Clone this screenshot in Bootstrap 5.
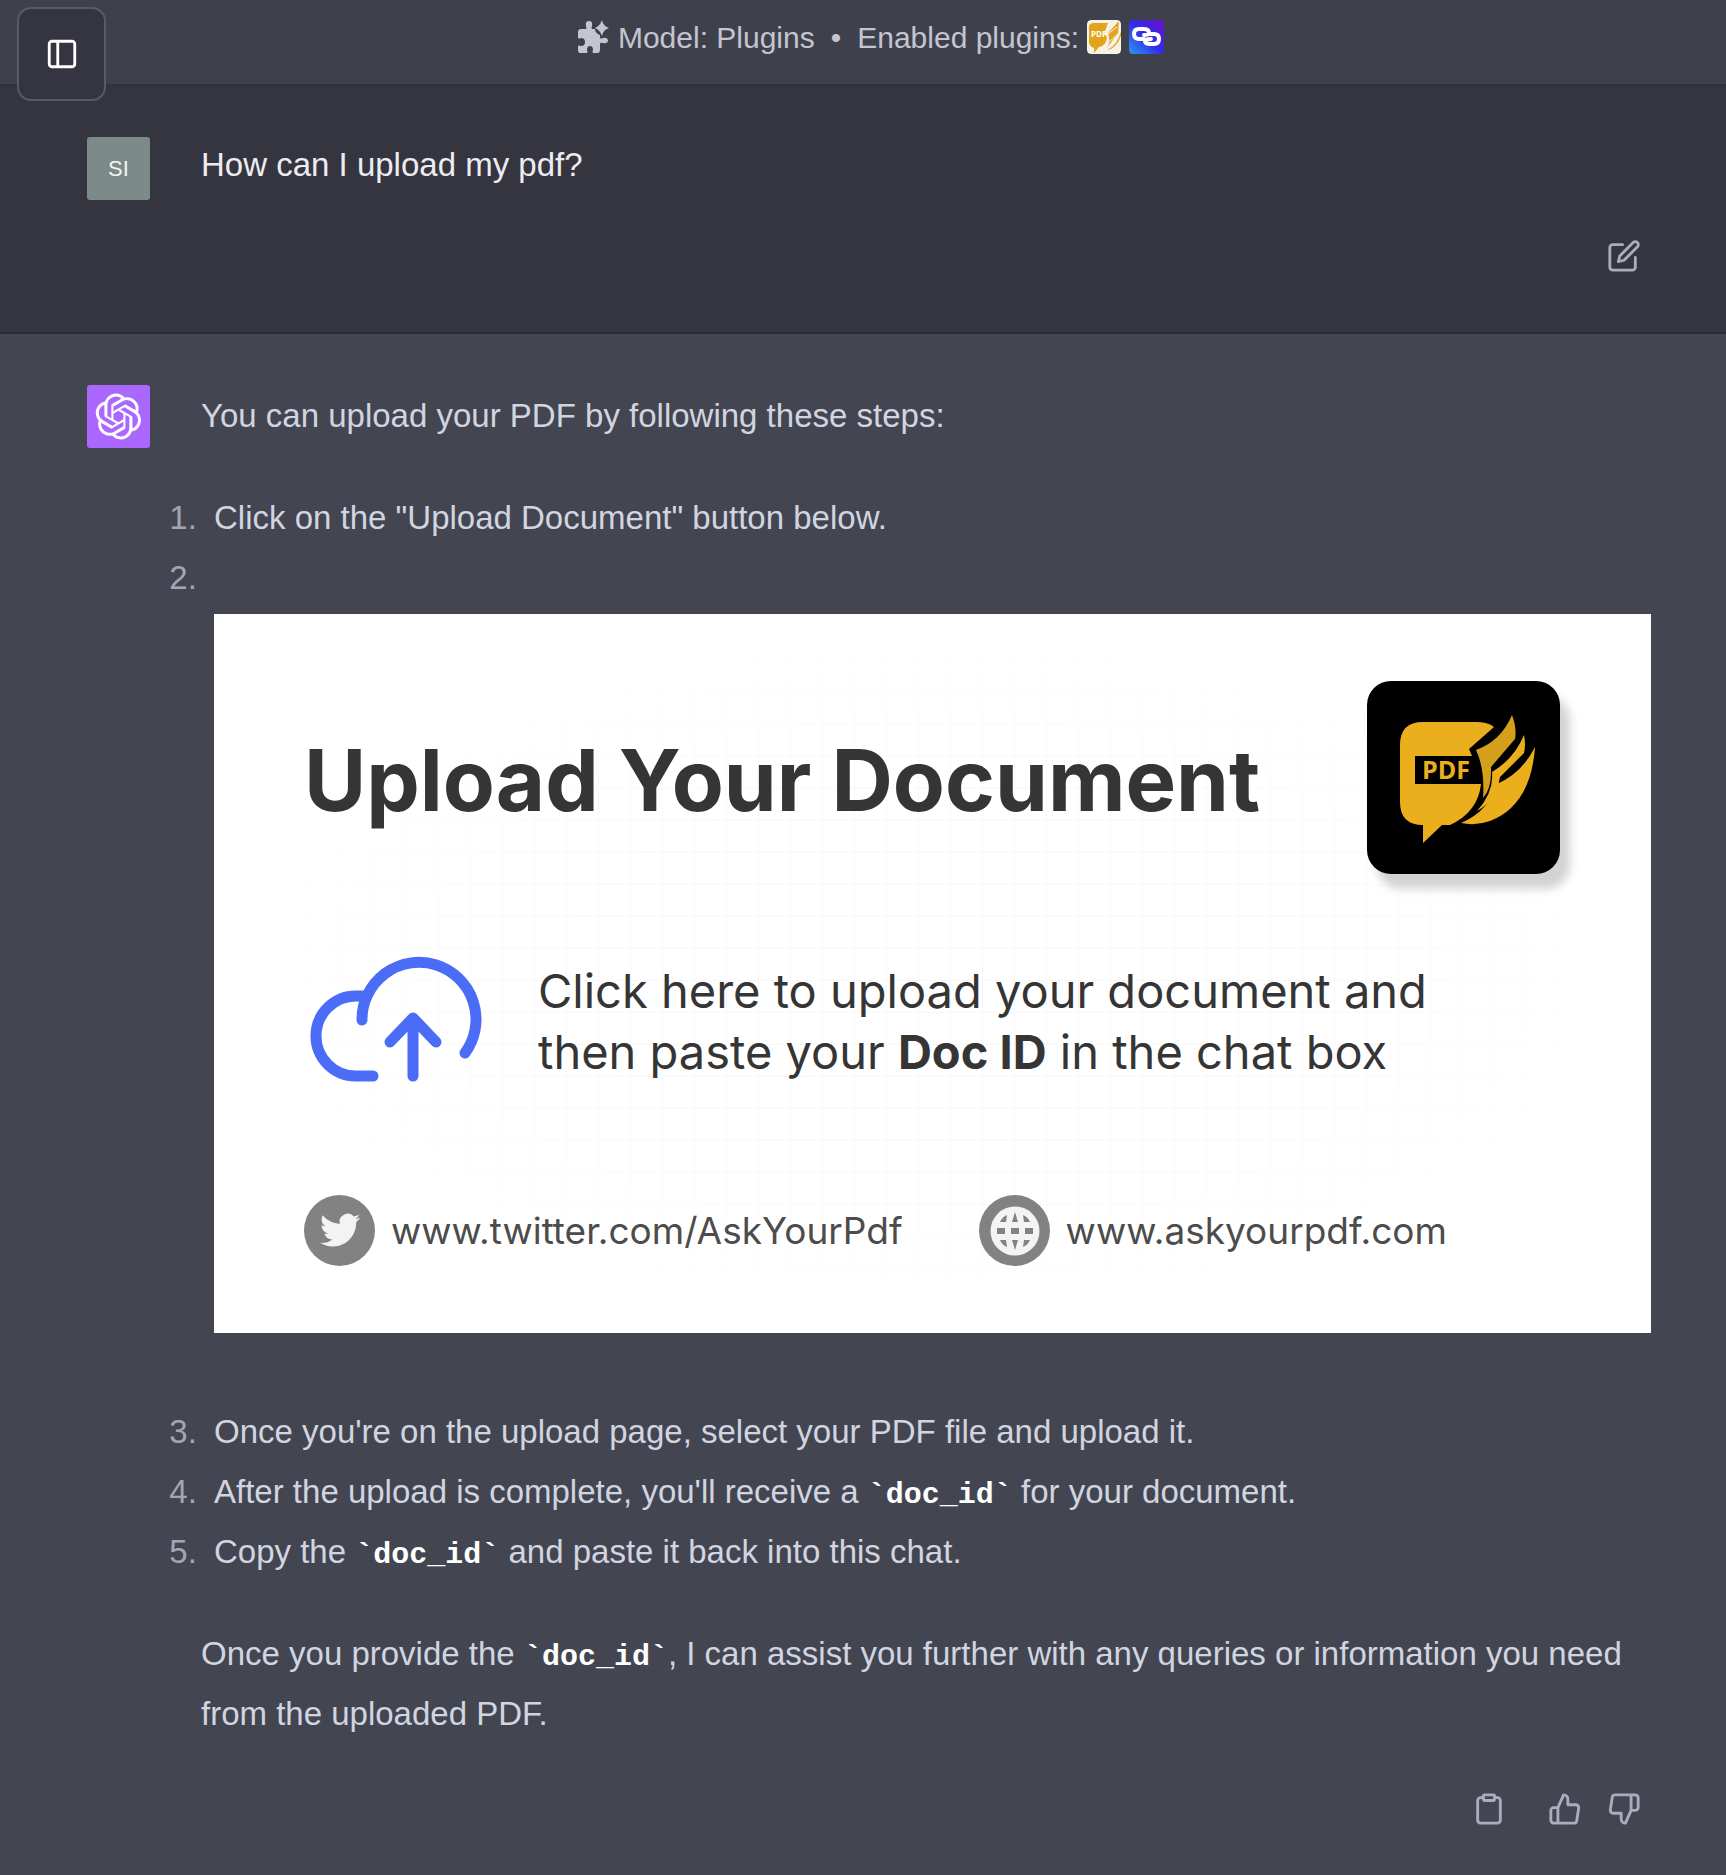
<!DOCTYPE html>
<html lang="en">
<head>
<meta charset="utf-8">
<meta name="viewport" content="width=device-width, initial-scale=1">
<title>Upload a PDF</title>
<link rel="stylesheet" href="https://cdn.jsdelivr.net/npm/bootstrap@5.3.0/dist/css/bootstrap.min.css">
<style>
body{background:#434651;color:#d1d5e0;font-family:"Liberation Sans",Arial,sans-serif;font-size:33px;line-height:60px}
.model-bar{background:#3e414c;color:#c5c5d2;height:86px;border-bottom:2px solid #32323d;font-size:30px;line-height:36px;padding:20px 0 0 14px}
.model-bar svg{flex:none}
.side-toggle{position:absolute;left:17px;top:7px;width:89px;height:94px;background:#343540;border:2px solid #595a68;border-radius:14px;color:#fff}
.turn{padding:51px 75px 0 87px;gap:51px}
.turn-user{background:#353540;color:#ececf1;border-bottom:2px solid #2b2c36;height:248px}
.turn-bot{padding-bottom:44px}
.avatar{width:63px;height:63px;border-radius:3px;flex:none}
.avatar-user{background:#7c8b89;color:#f1f4f4;font-size:22px;line-height:63px}
.avatar-bot{background:#ab68ff}
.user-line{line-height:56px;margin-bottom:46px}
.tool{background:none;border:0;padding:0;color:#acacbe;line-height:0}
.tool-copy{margin-right:42px}
.tool-up{margin-right:25px}
.tools{padding-right:10px}
.answer{padding-top:1px}
.answer p{margin:0 0 42px}
.answer ol{margin:0 0 42px;padding-left:5px}
.answer li{padding-left:8px}
.answer li::marker{color:#a3a5b3}
.answer code{font:bold 30px "Liberation Mono",monospace;color:#fff}
.answer-tools{padding-top:6px}
.banner{background:#fff;color:#353535;margin:6px 0 69px;padding:67px 91px 67px 90px;font-family:Inter,sans-serif;position:relative;text-decoration:none}
.banner:hover{color:#353535}
.banner::before{content:"";position:absolute;inset:0;background:repeating-linear-gradient(0deg,#f7f7f7 0 1px,transparent 1px 32px),repeating-linear-gradient(90deg,#f7f7f7 0 1px,transparent 1px 32px);-webkit-mask:radial-gradient(closest-side,#000 50%,transparent);mask:radial-gradient(closest-side,#000 50%,transparent)}
.banner>*{position:relative}
.banner-title{font-size:85px;line-height:100px;font-weight:700;padding-top:6px}
.app-logo{width:193px;height:193px;border-radius:24px;background:#000;box-shadow:10px 15px 10px #d3d3d3;flex:none}
.banner-text{font-size:47px;line-height:61px;padding-top:6px}
.banner-mid{gap:54px;margin-top:76px}
.banner-sites{font-size:37px;line-height:71px;color:#4c4c4c;gap:76px;margin-top:109px}
.site{gap:16px}
</style>
</head>
<body>
<header class="model-bar d-flex justify-content-center align-items-start">
  <svg width="34" height="34" viewBox="0 0 34 34" fill="currentColor" aria-hidden="true"><path d="M2 12q0-3 3-3h5q1-1 0-3-1-5 3-5t3 5q-1 2 0 3h3q0 4 5 6v3q1 1 3 0 4-1 5 2 0 4-5 3-3-1-3 1v6q0 3-3 3h-4q-1-1 0-3 0-4-3-4t-3 4q1 2 0 3H4q-2 0-2-3v-4q1-1 3 0 4 0 4-4t-4-4q-2 1-3 0z"/><path stroke="#3e414c" stroke-width="2" paint-order="stroke" d="M26 0q1 6 7 8-6 2-7 8-2-6-7-8 5-2 7-8z"/></svg>
  <span class="ms-2">Model: Plugins</span><span class="mx-3">•</span><span>Enabled plugins:</span>
  <svg class="ms-2 rounded-1" width="34" height="34" viewBox="0 0 34 34" role="img" aria-label="AskYourPDF"><rect width="34" height="34" rx="4" fill="#f6f2e6"/><path fill="#e3a41d" d="M2 7q0-4 5-4h14l-4 11 3 3q-1 9-8 10l-5 6v-5q-5-2-5-6zM21 13l11-12-1 12-11 15q4-5 1-15zM20 30q11-5 14-19v5q-5 13-14 14z"/><path fill="none" stroke="#f6f2e6" d="M21 14l9-7m-8 15l10-9M21 22q-1 4-5 6"/><text x="4" y="17" font-family="Open Sans,sans-serif" font-size="8" font-weight="700" fill="#fff">PDF</text></svg>
  <svg class="ms-2" width="35" height="34" viewBox="0 0 35 34" role="img" aria-label="Link reader"><defs><linearGradient id="lk" y1="1" x2="1" y2="0"><stop stop-color="#2a9af5"/><stop offset=".5" stop-color="#302be8"/><stop offset="1" stop-color="#6a0fc8"/></linearGradient></defs><rect width="35" height="34" rx="4" fill="url(#lk)"/><g fill="none" stroke="#fff" stroke-width="4" stroke-linecap="round"><path d="M15 19H10q-5 0-5-5t5-5h5q5 0 5 4 0 2-5 2"/><path d="M21 14h4q5 0 5 5t-5 5h-4q-5 0-5-3 0-2 6-2"/></g></svg>
</header>
<button class="side-toggle d-flex align-items-center justify-content-center" type="button" aria-label="Toggle sidebar"><svg width="34" height="34" viewBox="0 0 24 24" fill="none" stroke="currentColor" stroke-width="2"><rect x="3" y="3" width="18" height="18" rx="2"/><path d="M9 3v18"/></svg></button>
<main>
  <section class="turn turn-user d-flex">
    <div class="avatar avatar-user text-center">SI</div>
    <div class="flex-grow-1">
      <div class="user-line">How can I upload my pdf?</div>
      <div class="tools d-flex justify-content-end"><button class="tool" type="button" aria-label="Edit message"><svg width="34" height="34" viewBox="0 0 24 24" fill="none" stroke="currentColor" stroke-width="2" stroke-linecap="round" stroke-linejoin="round"><path d="M11 4H4a2 2 0 0 0-2 2v14a2 2 0 0 0 2 2h14a2 2 0 0 0 2-2v-7"/><path d="M18.500 2.500a2.121 2.121 0 0 1 3 3L12 15l-4 1 1-4 9.500-9.500z"/></svg></button></div>
    </div>
  </section>
  <section class="turn turn-bot d-flex">
    <div class="avatar avatar-bot d-flex align-items-center justify-content-center"><svg width="47" height="47" viewBox="0 0 41 41" fill="#fff" role="img" aria-label="ChatGPT"><path d="M37.532 16.87a9.963 9.963 0 0 0-.856-8.184 10.078 10.078 0 0 0-10.855-4.835A9.964 9.964 0 0 0 18.306.5a10.079 10.079 0 0 0-9.614 6.977 9.967 9.967 0 0 0-6.664 4.834 10.08 10.08 0 0 0 1.24 11.817 9.965 9.965 0 0 0 .856 8.185 10.079 10.079 0 0 0 10.855 4.835 9.965 9.965 0 0 0 7.516 3.35 10.078 10.078 0 0 0 9.617-6.981 9.967 9.967 0 0 0 6.663-4.834 10.079 10.079 0 0 0-1.243-11.813ZM22.498 37.886a7.474 7.474 0 0 1-4.799-1.735c.061-.033.168-.091.237-.134l7.964-4.6a1.294 1.294 0 0 0 .655-1.134V19.054l3.366 1.944a.12.12 0 0 1 .066.092v9.299a7.505 7.505 0 0 1-7.49 7.496ZM6.392 31.006a7.471 7.471 0 0 1-.894-5.023c.06.036.162.099.237.141l7.964 4.6a1.297 1.297 0 0 0 1.308 0l9.724-5.614v3.888a.12.12 0 0 1-.048.103l-8.051 4.649a7.504 7.504 0 0 1-10.24-2.744ZM4.297 13.62A7.469 7.469 0 0 1 8.2 10.333c0 .068-.004.19-.004.274v9.201a1.294 1.294 0 0 0 .654 1.132l9.723 5.614-3.366 1.944a.12.12 0 0 1-.114.01L7.04 23.856a7.504 7.504 0 0 1-2.743-10.237Zm27.658 6.437-9.724-5.615 3.367-1.943a.121.121 0 0 1 .113-.01l8.052 4.648a7.498 7.498 0 0 1-1.158 13.528v-9.476a1.293 1.293 0 0 0-.65-1.132Zm3.35-5.043c-.059-.037-.162-.099-.236-.141l-7.965-4.6a1.298 1.298 0 0 0-1.308 0l-9.723 5.614v-3.888a.12.12 0 0 1 .048-.103l8.05-4.645a7.497 7.497 0 0 1 11.135 7.763Zm-21.063 6.929-3.367-1.944a.12.12 0 0 1-.065-.092v-9.299a7.497 7.497 0 0 1 12.293-5.756 6.94 6.94 0 0 0-.236.134l-7.965 4.6a1.294 1.294 0 0 0-.654 1.132l-.006 11.225Zm1.829-3.943 4.33-2.501 4.332 2.5v5l-4.331 2.5-4.331-2.5V18Z"/></svg></div>
    <div class="flex-grow-1 answer">
      <p>You can upload your PDF by following these steps:</p>
      <ol>
        <li>Click on the "Upload Document" button below.</li>
        <li><br>
          <a class="banner d-block" href="#upload">
            <span class="d-flex justify-content-between align-items-center"><span class="banner-title">Upload Your Document</span>
              <svg class="app-logo" viewBox="0 0 193 193" role="img" aria-label="AskYourPDF logo"><g fill="#ebaf1d"><path d="M33 64q0-23 23-23h53q12 0 18 5l-25 22 3 7H48v28h66q-3 28-31 41H75l-19 18v-18q-23 0-23-23z"/><path fill="#d4a01a" d="M109 69q25-9 36-35 5 13 3 24l-24 28q1 22-8 31 2-29-7-48z"/><path d="M125 91q22-13 32-37 2 10 0 18l-24 24q-4 24-23 34 17-19 15-39z"/><path d="M94 142q28-12 36-39 25-11 38-37-4 58-45 74-14 5-29 2z"/></g><text x="55" y="98" font-family="Open Sans,sans-serif" font-size="25" font-weight="700" fill="#ebaf1d">PDF</text></svg>
            </span>
            <span class="banner-mid d-flex align-items-center">
              <svg width="180" height="136" viewBox="0 0 180 136" fill="none" stroke="#4a6cf7" stroke-width="11" stroke-linecap="round" stroke-linejoin="round" aria-hidden="true"><path d="M69 126H52a40 40 0 0 1 0-80h7M58 70a57 57 0 1 1 103 33M109 126V68M86 92l23-24 23 24"/></svg>
              <span class="banner-text">Click here to upload your document and<br>then paste your <b>Doc ID</b> in the chat box</span>
            </span>
            <span class="banner-sites d-flex">
              <span class="site d-flex"><svg width="71" height="71" viewBox="0 0 71 71" aria-hidden="true"><circle cx="35.500" cy="35.500" r="35.500" fill="#828282"/><path transform="translate(16 15) scale(1.680)" fill="#f2f4f3" d="M23.953 4.57a10 10 0 01-2.825.775 4.958 4.958 0 002.163-2.723c-.951.555-2.005.959-3.127 1.184a4.92 4.92 0 00-8.384 4.482C7.69 8.095 4.067 6.13 1.64 3.162a4.822 4.822 0 00-.666 2.475c0 1.71.87 3.213 2.188 4.096a4.904 4.904 0 01-2.228-.616v.06a4.923 4.923 0 003.946 4.827 4.996 4.996 0 01-2.212.085 4.936 4.936 0 004.604 3.417 9.867 9.867 0 01-6.102 2.105c-.39 0-.779-.023-1.17-.067a13.995 13.995 0 007.557 2.209c9.053 0 13.998-7.496 13.998-13.985 0-.21 0-.42-.015-.63A9.935 9.935 0 0024 4.59z"/></svg><span>www.twitter.com/AskYourPdf</span></span>
              <span class="site d-flex"><svg width="71" height="71" viewBox="0 0 71 71" aria-hidden="true"><circle cx="35.500" cy="35.500" r="35.500" fill="#828282"/><circle cx="36" cy="36" r="24.500" fill="#f2f4f3"/><path fill="#828282" d="M18 33h8v6h-8zM32 33h8v6h-8zM46 33h8v6h-8zM36 17l3 10h-6zM36 55l3-10h-6zM21 27q2-5 7-7l-1 7zM51 27q-2-5-7-7l1 7zM21 45q2 5 7 7l-1-7zM51 45q-2 5-7 7l1-7z"/></svg><span>www.askyourpdf.com</span></span>
            </span>
          </a></li>
        <li>Once you're on the upload page, select your PDF file and upload it.</li>
        <li>After the upload is complete, you'll receive a <code>`doc_id`</code> for your document.</li>
        <li>Copy the <code>`doc_id`</code> and paste it back into this chat.</li>
      </ol>
      <p>Once you provide the <code>`doc_id`</code>, I can assist you further with any queries or information you need from the uploaded PDF.</p>
      <div class="tools answer-tools d-flex justify-content-end">
        <button class="tool tool-copy" type="button" aria-label="Copy"><svg width="34" height="34" viewBox="0 0 24 24" fill="none" stroke="currentColor" stroke-width="2" stroke-linecap="round" stroke-linejoin="round"><path d="M16 4h2a2 2 0 0 1 2 2v14a2 2 0 0 1-2 2H6a2 2 0 0 1-2-2V6a2 2 0 0 1 2-2h2"/><rect x="8" y="2" width="8" height="4" rx="1"/></svg></button>
        <button class="tool tool-up" type="button" aria-label="Good response"><svg width="34" height="34" viewBox="0 0 24 24" fill="none" stroke="currentColor" stroke-width="2" stroke-linecap="round" stroke-linejoin="round"><path d="M14 9V5a3 3 0 0 0-3-3l-4 9v11h11.280a2 2 0 0 0 2-1.700l1.380-9a2 2 0 0 0-2-2.300zM7 22H4a2 2 0 0 1-2-2v-7a2 2 0 0 1 2-2h3"/></svg></button>
        <button class="tool" type="button" aria-label="Bad response"><svg width="34" height="34" viewBox="0 0 24 24" fill="none" stroke="currentColor" stroke-width="2" stroke-linecap="round" stroke-linejoin="round"><path d="M10 15v4a3 3 0 0 0 3 3l4-9V2H5.720a2 2 0 0 0-2 1.700l-1.380 9a2 2 0 0 0 2 2.300zm7-13h2.670A2.310 2.310 0 0 1 22 4v7a2.310 2.310 0 0 1-2.330 2H17"/></svg></button>
      </div>
    </div>
  </section>
</main>
<script src="https://cdn.jsdelivr.net/npm/bootstrap@5.3.0/dist/js/bootstrap.bundle.min.js"></script>
</body>
</html>
